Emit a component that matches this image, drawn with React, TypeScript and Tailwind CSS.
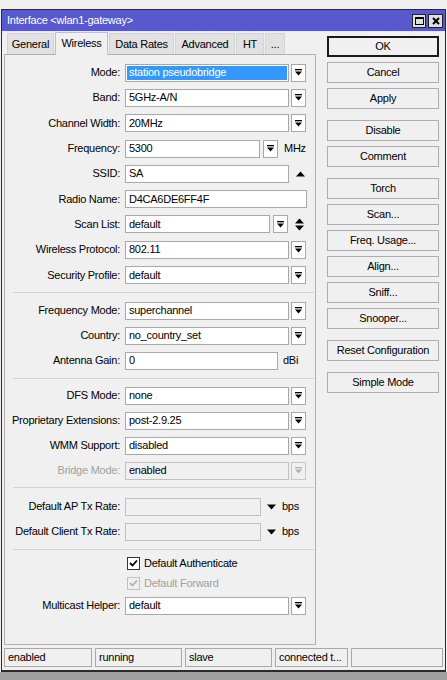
import React from "react";

const DropIcon = ({ c = "#000" }: { c?: string }) => (
  <svg width="7" height="7" viewBox="0 0 7 7">
    <rect x="0" y="0" width="7" height="1.3" fill={c} />
    <path d="M0 2.6 H7 L3.5 6.6 Z" fill={c} />
  </svg>
);

const DropBtn = ({ disabled = false, ml = "ml-[2px]" }: { disabled?: boolean; ml?: string }) => (
  <div
    className={`${ml} h-[18px] w-[15px] shrink-0 border flex items-center justify-center ${
      disabled ? "bg-[#f0f0f0] border-[#c8c8c8]" : "bg-white border-[#a8a8a8]"
    }`}
  >
    <DropIcon c={disabled ? "#b0b0b0" : "#000"} />
  </div>
);

const Label = ({ children, disabled = false }: { children: React.ReactNode; disabled?: boolean }) => (
  <div className={`w-[115px] shrink-0 text-right whitespace-nowrap ${disabled ? "text-[#a0a0a0]" : ""}`}>
    {children}
  </div>
);

const Input = ({
  w,
  children,
  variant = "normal",
}: {
  w: string;
  children?: React.ReactNode;
  variant?: "normal" | "selected" | "disabled";
}) => (
  <div
    className={`${w} h-[18px] shrink-0 border flex items-center whitespace-nowrap overflow-hidden ${
      variant === "disabled" ? "bg-[#f0f0f0] border-[#c0c0c0]" : "bg-white border-[#a8a8a8]"
    } ${variant === "selected" ? "p-[1px]" : "pl-[3px]"}`}
  >
    {variant === "selected" ? (
      <div className="w-full h-full bg-[#3399ff] text-white pl-[2px] flex items-center">{children}</div>
    ) : (
      children
    )}
  </div>
);

const Row = ({ h = "h-[25.3px]", children }: { h?: string; children: React.ReactNode }) => (
  <div className={`flex items-center ${h}`}>{children}</div>
);

const SelectRow = ({ label, value, variant = "normal", disabled = false, h }: { label: string; value: string; variant?: "normal" | "selected" | "disabled"; disabled?: boolean; h?: string }) => (
  <Row h={h}>
    <Label disabled={disabled}>{label}</Label>
    <div className="ml-[5px] flex items-center">
      <Input w="w-[164px]" variant={variant}>{value}</Input>
      <DropBtn disabled={disabled} />
    </div>
  </Row>
);

const Sep = ({ mt }: { mt: string }) => <div className={`${mt} h-px bg-[#d2d2d2] ml-[8px] mr-[1px]`} />;

const UpTri = () => (
  <svg width="9" height="6" viewBox="0 0 9 6">
    <path d="M0 5.5 L4.5 0.5 L9 5.5 Z" fill="#000" />
  </svg>
);
const DownTri = () => (
  <svg width="9" height="6" viewBox="0 0 9 6">
    <path d="M0 0.5 L9 0.5 L4.5 5.5 Z" fill="#000" />
  </svg>
);

const Btn = ({ children, def = false, mt = "" }: { children: React.ReactNode; def?: boolean; mt?: string }) => (
  <div
    className={`${mt} w-[112px] h-[21px] flex items-center justify-center bg-[#f0f0f0] ${
      def ? "border-2 border-[#1a1a1a]" : "border border-[#adadad]"
    }`}
  >
    {children}
  </div>
);

const Check = ({ disabled = false }: { disabled?: boolean }) => (
  <div
    className={`w-[13px] h-[13px] border flex items-center justify-center ${
      disabled ? "border-[#c0c0c0] bg-[#f0f0f0]" : "border-[#333] bg-white"
    }`}
  >
    <svg width="9" height="8" viewBox="0 0 9 8">
      <path d="M1 4 L3.5 6.5 L8 1.5" stroke={disabled ? "#b0b0b0" : "#000"} strokeWidth="1.8" fill="none" />
    </svg>
  </div>
);

export default function App() {
  const tabs = ["General", "Wireless", "Data Rates", "Advanced", "HT", "..."];
  const tabW = ["w-[47px]", "w-[53px]", "w-[65px]", "w-[60px]", "w-[28px]", "w-[20px]"];
  return (
    <div className="w-[447px] h-[680px] bg-[#f0f0f0] flex flex-col overflow-hidden text-[11px] tracking-[-0.25px] text-black font-['Liberation_Sans',Arial,sans-serif] leading-none">
      <div className="h-[9px] shrink-0" />
      <div className="ml-[1px] w-[445px] h-[663px] shrink-0 border border-b-2 border-[#2b2b2b] bg-[#f0f0f0] flex flex-col">
        {/* Title bar */}
        <div className="h-[21px] shrink-0 bg-[#5858cf] flex items-center justify-between pl-[5px] pr-[2px]">
          <span className="text-white">Interface &lt;wlan1-gateway&gt;</span>
          <div className="flex items-center gap-[2px]">
            <div className="w-[14px] h-[14px] bg-[#e0e0e0] border border-[#222] flex items-center justify-center">
              <div className="w-[9px] h-[8px] border border-black border-t-2" />
            </div>
            <div className="w-[15px] h-[14px] bg-[#e0e0e0] border border-[#222] flex items-center justify-center">
              <svg width="8" height="8" viewBox="0 0 8 8">
                <path d="M1 1 L7 7 M7 1 L1 7" stroke="#000" strokeWidth="2" />
              </svg>
            </div>
          </div>
        </div>
        {/* Main */}
        <div className="flex h-[614px] shrink-0 pl-[2px]">
          <div className="flex flex-col w-[312px]">
            <div className="flex items-end h-[23px] pl-[3px] gap-[1px]">
              {tabs.map((t, i) =>
                i === 1 ? (
                  <div
                    key={t}
                    className={`${tabW[i]} h-[23px] -mb-[1px] relative z-10 bg-[#f0f0f0] border border-b-0 border-[#c0c0c0] flex items-start pt-[5px] justify-center`}
                  >
                    {t}
                  </div>
                ) : (
                  <div
                    key={t}
                    className={`${tabW[i]} h-[21px] bg-[#e1e1e1] border border-b-0 border-[#d4d4d4] flex items-center justify-center pt-[1px]`}
                  >
                    {t}
                  </div>
                )
              )}
            </div>
            <div className="h-[591px] border border-[#b0b0b0] bg-[#f0f0f0] flex flex-col pt-[5px]">
              <div className="h-[232px] flex flex-col">
                <SelectRow label="Mode:" value="station pseudobridge" variant="selected" />
                <SelectRow label="Band:" value="5GHz-A/N" />
                <SelectRow label="Channel Width:" value="20MHz" />
                <Row>
                  <Label>Frequency:</Label>
                  <div className="ml-[5px] flex items-center">
                    <Input w="w-[135px]">5300</Input>
                    <DropBtn ml="ml-[3px]" />
                    <span className="ml-[6px]">MHz</span>
                  </div>
                </Row>
                <Row>
                  <Label>SSID:</Label>
                  <div className="ml-[5px] flex items-center">
                    <Input w="w-[164px]">SA</Input>
                    <div className="ml-[7px]">
                      <UpTri />
                    </div>
                  </div>
                </Row>
                <Row>
                  <Label>Radio Name:</Label>
                  <div className="ml-[5px] flex items-center">
                    <Input w="w-[182px]">D4CA6DE6FF4F</Input>
                  </div>
                </Row>
                <Row>
                  <Label>Scan List:</Label>
                  <div className="ml-[5px] flex items-center">
                    <Input w="w-[145px]">default</Input>
                    <DropBtn ml="ml-[3px]" />
                    <div className="ml-[7px] flex flex-col gap-[1px]">
                      <UpTri />
                      <DownTri />
                    </div>
                  </div>
                </Row>
                <SelectRow label="Wireless Protocol:" value="802.11" />
                <SelectRow label="Security Profile:" value="default" />
              </div>
              <Sep mt="mt-0" />
              <div className="mt-[5px] flex flex-col">
                <SelectRow label="Frequency Mode:" value="superchannel" h="h-[25px]" />
                <SelectRow label="Country:" value="no_country_set" h="h-[25px]" />
                <Row h="h-[25px]">
                  <Label>Antenna Gain:</Label>
                  <div className="ml-[5px] flex items-center">
                    <Input w="w-[153px]">0</Input>
                    <span className="ml-[5px]">dBi</span>
                  </div>
                </Row>
              </div>
              <Sep mt="mt-[5px]" />
              <div className="mt-[4px] flex flex-col">
                <SelectRow label="DFS Mode:" value="none" h="h-[25px]" />
                <SelectRow label="Proprietary Extensions:" value="post-2.9.25" h="h-[25px]" />
                <SelectRow label="WMM Support:" value="disabled" h="h-[25px]" />
                <SelectRow label="Bridge Mode:" value="enabled" variant="disabled" disabled h="h-[25px]" />
              </div>
              <Sep mt="mt-[4px]" />
              <div className="mt-[6px] flex flex-col">
                <Row h="h-[25px]">
                  <Label>Default AP Tx Rate:</Label>
                  <div className="ml-[5px] flex items-center">
                    <Input w="w-[136px]" variant="disabled" />
                    <div className="ml-[6px]">
                      <DownTri />
                    </div>
                    <span className="ml-[6px]">bps</span>
                  </div>
                </Row>
                <Row h="h-[25px]">
                  <Label>Default Client Tx Rate:</Label>
                  <div className="ml-[5px] flex items-center">
                    <Input w="w-[136px]" variant="disabled" />
                    <div className="ml-[6px]">
                      <DownTri />
                    </div>
                    <span className="ml-[6px]">bps</span>
                  </div>
                </Row>
              </div>
              <Sep mt="mt-[5px]" />
              <div className="mt-[3px] flex flex-col">
                <div className="h-[20px] flex items-center pl-[122px]">
                  <Check />
                  <span className="ml-[4px]">Default Authenticate</span>
                </div>
                <div className="h-[20px] flex items-center pl-[122px]">
                  <Check disabled />
                  <span className="ml-[4px] text-[#a0a0a0]">Default Forward</span>
                </div>
                <SelectRow label="Multicast Helper:" value="default" h="h-[25px]" />
              </div>
            </div>
          </div>
          <div className="ml-[11px] pt-[5px] flex flex-col">
            <Btn def>OK</Btn>
            <Btn mt="mt-[5px]">Cancel</Btn>
            <Btn mt="mt-[5px]">Apply</Btn>
            <Btn mt="mt-[11px]">Disable</Btn>
            <Btn mt="mt-[5px]">Comment</Btn>
            <Btn mt="mt-[11px]">Torch</Btn>
            <Btn mt="mt-[5px]">Scan...</Btn>
            <Btn mt="mt-[5px]">Freq. Usage...</Btn>
            <Btn mt="mt-[5px]">Align...</Btn>
            <Btn mt="mt-[5px]">Sniff...</Btn>
            <Btn mt="mt-[5px]">Snooper...</Btn>
            <Btn mt="mt-[11px]">Reset Configuration</Btn>
            <Btn mt="mt-[11px]">Simple Mode</Btn>
          </div>
        </div>
        {/* Status bar */}
        <div className="mt-[3px] h-[19px] flex pl-[2px] gap-[3px]">
          {[
            ["enabled", "w-[88px]"],
            ["running", "w-[87px]"],
            ["slave", "w-[87px]"],
            ["connected t...", "w-[73px]"],
            ["", "w-[92px]"],
          ].map(([t, w], i) => (
            <div key={i} className={`${w} h-[19px] border border-[#a8a8a8] flex items-center pl-[3px] whitespace-nowrap`}>
              {t}
            </div>
          ))}
        </div>
      </div>
      <div className="flex-1 bg-[#a0a0a0]" />
    </div>
  );
}
